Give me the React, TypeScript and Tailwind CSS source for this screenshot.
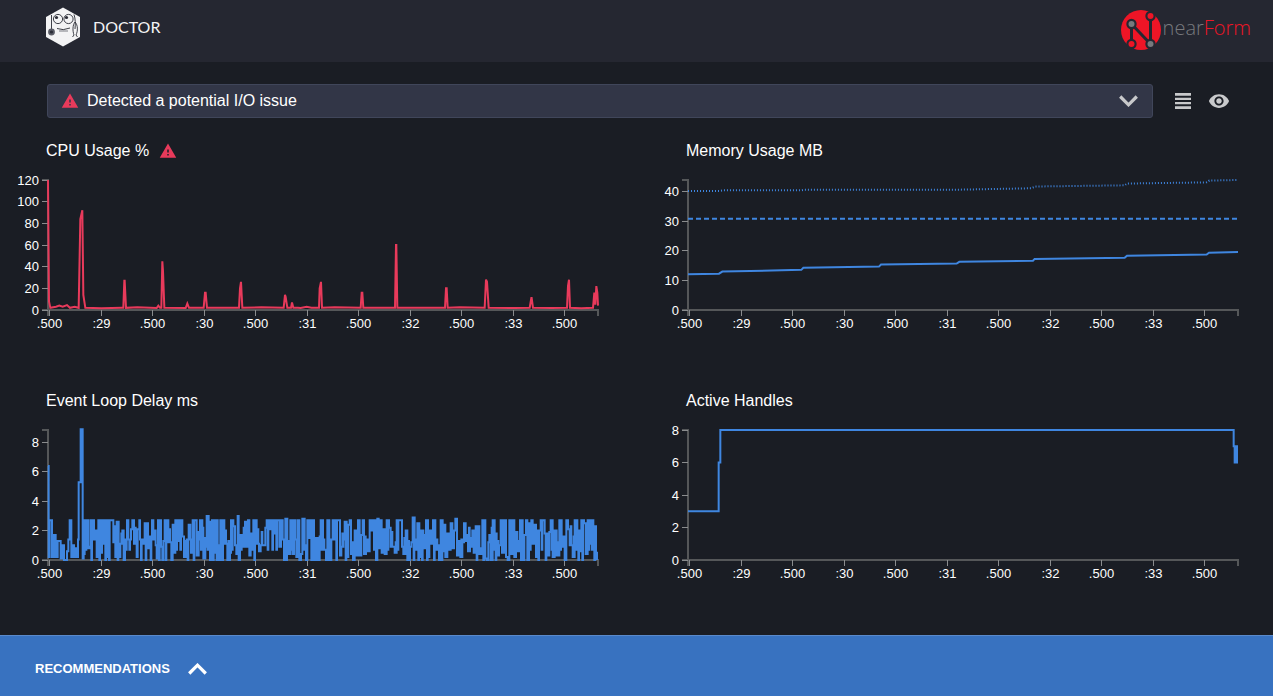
import React from 'react'
import { MdVisibility, MdWarning } from 'react-icons/md'

type Point = [number, number]
type Tick = { label: string; y: number }

/* Plot frame inside each 600 x 170 chart drawing */
const LEFT = 40
const RIGHT = 590
const TOP = 10
const BOTTOM = 140

const TIME_TICKS: [number, string][] = [
  [41.5, '.500'], [93.5, ':29'], [144.5, '.500'], [196.5, ':30'], [247.5, '.500'], [299.5, ':31'],
  [350.5, '.500'], [402.5, ':32'], [453.5, '.500'], [505.5, ':33'], [556.5, '.500'],
]

/* Samples: x in thirds of a unit from the left of the plot, y in percent */
const CPU: Point[] = [
  [0, 120], [3, 8], [7, 2], [24, 3], [34, 4], [44, 3], [57, 4.5], [66, 2], [80, 3], [92, 2], [97, 84], [103, 92], [106, 14],
  [112, 2], [160, 1.6], [222, 2], [226, 2], [229, 27], [230, 27], [234, 2], [268, 2.5], [326, 1.8], [331, 4], [336, 2], [340, 2],
  [343, 45], [345, 36], [349, 2], [413, 1.8], [418, 6], [423, 2], [467, 2], [471, 16], [473, 16], [477, 2], [573, 2],
  [576, 20], [579, 26], [583, 2], [640, 2.5], [707, 2], [711, 14], [713, 12], [718, 2], [729, 2], [732, 7], [736, 2],
  [750, 2], [758, 1.8], [776, 3], [790, 2], [813, 2], [815, 20], [819, 26], [822, 2], [860, 2.5], [938, 2], [941, 16],
  [943, 16], [946, 2], [1041, 2], [1044, 60], [1045, 60], [1048, 2], [1100, 2], [1191, 2], [1194, 20], [1196, 20], [1199, 2],
  [1235, 2.5], [1310, 2], [1314, 28], [1317, 26], [1322, 2], [1400, 1.8], [1445, 2], [1450, 11], [1451, 11],
  [1455, 2], [1510, 1.8], [1557, 2], [1560, 22], [1563, 28], [1566, 2], [1600, 1.6], [1635, 2], [1639, 16],
  [1642, 5], [1645, 22], [1648, 16], [1650, 4],
]

/* Samples: x in thirds of a unit from the left of the plot, y in tenths of a millisecond */
const DELAY: Point[] = [
  [0, 64], [2, 2], [5, 27], [12, 2], [17, 17], [23, 2], [29, 13], [38, 1], [43, 10], [48, 0], [57, 6], [61, 14], [65, 27],
  [70, 2], [75, 10], [78, 2], [82, 8], [86, 2], [90, 14], [92, 53], [98, 89], [104, 1], [107, 4], [110, 27], [120, 8],
  [124, 9], [127, 27], [138, 14], [143, 20], [146, 2], [151, 27], [158, 5], [162, 27], [166, 11], [169, 27], [176, 2],
  [180, 27], [196, 12], [199, 23], [202, 2], [206, 26], [212, 2], [217, 11], [223, 20], [227, 0], [231, 14], [237, 27],
  [241, 14], [249, 21], [253, 27], [258, 11], [266, 2], [269, 21], [274, 27], [276, 14], [286, 11], [290, 25], [300, 8],
  [305, 16], [312, 27], [316, 14], [319, 20], [323, 10], [326, 1], [330, 27], [339, 9], [343, 0], [346, 13], [350, 27],
  [361, 12], [370, 0], [374, 24], [377, 5], [382, 27], [390, 13], [394, 27], [403, 16], [408, 2], [416, 14], [422, 24],
  [427, 14], [429, 5], [434, 27], [446, 3], [452, 14], [456, 27], [463, 22], [466, 1], [472, 9], [476, 30], [482, 26],
  [486, 0], [492, 27], [498, 5], [503, 27], [509, 10], [513, 0], [517, 27], [520, 0], [525, 27], [529, 11], [538, 0],
  [546, 5], [549, 27], [556, 23], [561, 10], [565, 4], [569, 30], [572, 0], [576, 17], [584, 9], [591, 26], [596, 9],
  [600, 27], [604, 3], [608, 18], [616, 27], [626, 11], [633, 6], [638, 10], [652, 22], [656, 27], [666, 21], [670, 27],
  [678, 18], [682, 27], [694, 9], [699, 27], [704, 14], [708, 0], [712, 28], [718, 13], [723, 4], [727, 27], [734, 4],
  [738, 27], [742, 14], [745, 2], [749, 27], [754, 0], [759, 4], [763, 28], [770, 10], [774, 0], [778, 27], [783, 15],
  [787, 27], [798, 0], [804, 15], [810, 0], [815, 16], [818, 27], [825, 14], [829, 7], [834, 0], [838, 27], [844, 0],
  [850, 14], [854, 27], [858, 14], [862, 27], [876, 3], [880, 9], [886, 14], [890, 26], [896, 2], [901, 24], [905, 27],
  [909, 4], [915, 0], [920, 20], [925, 3], [930, 27], [935, 3], [940, 17], [944, 27], [948, 4], [954, 14], [960, 6],
  [965, 27], [970, 20], [975, 27], [984, 0], [988, 28], [992, 8], [996, 27], [1001, 5], [1006, 21], [1010, 4], [1016, 27],
  [1023, 22], [1028, 9], [1040, 5], [1046, 27], [1062, 9], [1066, 4], [1073, 20], [1078, 0], [1086, 9], [1090, 12],
  [1094, 29], [1100, 14], [1108, 25], [1114, 2], [1119, 20], [1126, 8], [1134, 27], [1140, 2], [1144, 20], [1149, 11],
  [1155, 27], [1162, 14], [1168, 10], [1173, 0], [1178, 27], [1184, 6], [1188, 24], [1192, 2], [1198, 18], [1203, 7],
  [1208, 25], [1213, 8], [1218, 20], [1222, 28], [1227, 3], [1232, 13], [1237, 2], [1243, 12], [1248, 25], [1253, 13],
  [1260, 6], [1266, 9], [1273, 20], [1277, 5], [1283, 23], [1289, 4], [1295, 8], [1299, 4], [1303, 27], [1312, 1],
  [1316, 0], [1321, 12], [1328, 0], [1334, 27], [1340, 18], [1346, 3], [1353, 10], [1358, 27], [1362, 5], [1368, 27],
  [1374, 2], [1379, 0], [1384, 27], [1388, 4], [1394, 27], [1399, 2], [1404, 19], [1408, 6], [1416, 27], [1424, 0],
  [1429, 17], [1434, 27], [1438, 0], [1443, 25], [1450, 27], [1454, 11], [1460, 24], [1464, 2], [1468, 20], [1478, 27],
  [1490, 18], [1500, 3], [1504, 19], [1508, 27], [1514, 2], [1520, 20], [1526, 3], [1534, 27], [1541, 9], [1546, 16],
  [1550, 0], [1555, 27], [1560, 21], [1565, 10], [1574, 2], [1580, 27], [1588, 20], [1594, 6], [1600, 27], [1608, 25],
  [1613, 4], [1619, 27], [1625, 11], [1629, 27], [1636, 23], [1644, 5], [1647, 0],
]

const HEAP_USED: Point[] = [
  [0, 12.1], [93, 12.3], [103, 13], [340, 13.6], [346, 14.3], [573, 14.7], [579, 15.4], [806, 15.7], [814, 16.3], [1035, 16.7],
  [1040, 17.3], [1310, 17.7], [1317, 18.4], [1556, 18.8], [1563, 19.4], [1650, 19.6],
]

const RSS: Point[] = [
  [0, 40.3], [95, 40.3], [105, 40.5], [340, 40.5], [350, 40.7], [800, 40.7], [1030, 41.2], [1042, 41.8], [1310, 42.2],
  [1317, 42.8], [1556, 43.2], [1564, 43.8], [1650, 44],
]

const px = (x: number) => (LEFT + x / 3).toFixed(2)
const py = (v: number, max: number) => (BOTTOM - (v / max) * (BOTTOM - TOP)).toFixed(2)

const line = (points: Point[], max: number) =>
  points.map(([x, v], i) => `${i ? 'L' : 'M'}${px(x)},${py(v, max)}`).join('')

const steps = (points: Point[], max: number) =>
  points.map(([x, v], i) => (i ? `H${px(x)}V${py(v, max)}` : `M${px(x)},${py(v, max)}`)).join('')

const fillGaps = (points: Point[]): Point[] =>
  points.flatMap(([x, v], i): Point[] => {
    const next = points[i + 1]
    if (!next || x < 110 || next[0] - x < 6) return [[x, v]]
    const swing = v > 13 ? (i * 7) % 14 : 12 + ((i * 5) % 12)
    return [[x, v], [x + 3, swing], [x + 5, v]]
  })

const ticks = (values: number[], max: number): Tick[] =>
  values.map((v) => ({ label: String(v), y: Math.floor(BOTTOM - (v / max) * (BOTTOM - TOP)) + 0.5 }))

type ChartProps = {
  title: string
  alert?: boolean
  yTicks: Tick[]
  children: React.ReactNode
}

function Chart({ title, alert, yTicks, children }: ChartProps) {
  return (
    <section className="h-[250px]">
      <h2 className="flex h-9 items-center gap-2.5 pb-0.5 pl-[38px] text-base text-white">
        {title}
        {alert && <MdWarning className="size-[18px] text-[#e83a5b]" aria-label="Issue detected" />}
      </h2>
      <svg viewBox="0 0 600 170" className="block w-full" role="img" aria-label={title}>
        <g fill="none" stroke="#555759" strokeWidth="2">
          <path d={`M34,${TOP}H${LEFT}V${BOTTOM}H34`} />
          <path d={`M${LEFT},146V${BOTTOM}H${RIGHT}V146`} />
        </g>
        <g stroke="#8a8c8e">
          {yTicks.map((t) => (
            <line key={t.label} x1="34" x2="40" y1={t.y} y2={t.y} />
          ))}
          {TIME_TICKS.map(([x]) => (
            <line key={x} x1={x} x2={x} y1="140" y2="146" />
          ))}
        </g>
        <g fill="#fff" fontSize="13">
          {yTicks.map((t) => (
            <text key={t.label} x="31" y={t.y + 4.5} textAnchor="end">
              {t.label}
            </text>
          ))}
          {TIME_TICKS.map(([x, label]) => (
            <text key={x} x={x} y="158" textAnchor="middle">
              {label}
            </text>
          ))}
        </g>
        <g fill="none" strokeWidth="2">
          {children}
        </g>
      </svg>
    </section>
  )
}

function DoctorLogo() {
  return (
    <svg viewBox="0 0 34 40" className="h-10 w-[34px]" aria-hidden="true">
      <path d="M17 0.5L34 10V30L17 39.500L0 30V10Z" fill="#f3f3f4" />
      <g fill="none" stroke="#2a2c36" strokeWidth="0.9">
        <circle cx="12" cy="12" r="4.600" />
        <circle cx="22.500" cy="12" r="4.600" />
        <path d="M5.500 8V23M28 7.500C29.500 12 29.500 17 29 22M11 21.500Q17 24 24 21" />
        <path d="M13 24H22" strokeWidth="0.6" />
        <path d="M29 15C26.500 18 26.500 24 28 28L26.500 30M29 15C32 18 32 24 30 28L31.500 30" />
      </g>
      <circle cx="10.500" cy="10.500" r="1.600" fill="#2a2c36" />
      <circle cx="20.500" cy="10.500" r="1.600" fill="#2a2c36" />
      <circle cx="5.500" cy="25" r="2.500" fill="#2a2c36" stroke="#5a5c66" strokeWidth="1.800" />
    </svg>
  )
}

function NearFormMark() {
  return (
    <svg viewBox="0 0 40 40" className="size-10" aria-hidden="true">
      <circle cx="20" cy="20" r="20" fill="#ee1526" />
      <path d="M10.500 14V34M10.500 14L29.500 34M29.500 6V34" fill="none" stroke="#252731" strokeWidth="3" />
      <g fill="#252731">
        <circle cx="10.500" cy="14" r="5.200" />
        <circle cx="29.500" cy="6" r="5.200" />
        <circle cx="10.500" cy="34" r="5.200" />
        <circle cx="29.500" cy="34" r="5.200" />
      </g>
      <g fill="#ee1526">
        <circle cx="29.500" cy="6" r="3" />
        <circle cx="10.500" cy="34" r="3" />
      </g>
      <g fill="#77797d">
        <circle cx="10.500" cy="14" r="3" />
        <circle cx="29.500" cy="34" r="3" />
      </g>
    </svg>
  )
}

function Chevron({ up = false }: { up?: boolean }) {
  return (
    <svg viewBox="0 0 19 12" className="h-3 w-[19px]" aria-hidden="true">
      <path d={up ? 'M1.200 10.500L9.500 2.200L17.800 10.500' : 'M1.200 1.500L9.500 9.800L17.800 1.500'} fill="none" stroke="currentColor" strokeWidth="3.200" />
    </svg>
  )
}

export default function App() {
  return (
    <div className="flex min-h-screen flex-col bg-[#1a1d24] font-['Liberation_Sans',Arial,sans-serif] text-white">
      <header className="flex h-[62px] items-center justify-between bg-[#252731] pr-[22px] pb-0.5 pl-[46px]">
        <div className="flex items-center gap-[13px] pb-1.5">
          <DoctorLogo />
          <h1 className="font-['Lato','Liberation_Sans',sans-serif] text-base text-[#f3f3f4]">DOCTOR</h1>
        </div>
        <a href="#nearform" className="flex items-center gap-0.5">
          <NearFormMark />
          <span className="pb-1 font-['Open_Sans','Noto_Sans',sans-serif] text-xl font-light text-[#77797d]">
            near<span className="text-[#ee1526]">Form</span>
          </span>
        </a>
      </header>

      <div className="flex items-center pt-[22px] pr-[43px] pl-[47px]">
        <button type="button" className="flex h-[34px] flex-1 items-center rounded-[3px] border border-[#40465a] bg-[#323647] pr-3.5 pl-[13px] text-left text-base">
          <MdWarning className="mr-2 size-[18px] text-[#e83a5b]" aria-hidden="true" />
          <span className="flex-1">Detected a potential I/O issue</span>
          <span className="text-[#c8c9cb]">
            <Chevron />
          </span>
        </button>
        <button type="button" aria-label="Grid layout" className="ml-[22px] text-[#c8c9cb]">
          <svg viewBox="0 0 16 16" className="size-4" fill="currentColor" aria-hidden="true">
            <path d="M0 0H16V2.800H0ZM0 4.800H16V7H0ZM0 9H16V11.200H0ZM0 13.200H16V16H0Z" />
          </svg>
        </button>
        <button type="button" aria-label="Toggle theme" className="ml-[17px] text-[#c8c9cb]">
          <MdVisibility className="size-[22px]" />
        </button>
      </div>

      <main className="grid grid-cols-2 gap-x-10 pt-4 pr-[25px] pl-2">
        <Chart title="CPU Usage %" alert yTicks={ticks([0, 20, 40, 60, 80, 100, 120], 120)}>
          <path d={line(CPU, 120)} stroke="#e83a5b" />
        </Chart>
        <Chart title="Memory Usage MB" yTicks={ticks([0, 10, 20, 30, 40], 44)}>
          <path d={line(RSS, 44)} stroke="#3f86e0" strokeDasharray="1 2" />
          <path d={line([[0, 30.9], [1650, 30.9]], 44)} stroke="#3f86e0" strokeDasharray="5 3" />
          <path d={line(HEAP_USED, 44)} stroke="#3f86e0" />
        </Chart>
        <Chart title="Event Loop Delay ms" yTicks={ticks([0, 2, 4, 6, 8], 8.85)}>
          <path d={steps(fillGaps(DELAY), 88.5)} stroke="#3f86e0" />
        </Chart>
        <Chart title="Active Handles" yTicks={ticks([0, 2, 4, 6, 8], 8)}>
          <path d={steps([[0, 3], [92, 6], [97, 8], [1637, 7], [1640, 6], [1643, 7], [1647, 6], [1650, 6]], 8)} stroke="#3f86e0" />
        </Chart>
      </main>

      <footer className="mt-auto border-t border-[#5a8acb] bg-[#3872c0]">
        <button type="button" className="flex h-[60px] w-full items-center gap-[18px] px-[35px] pt-1.5 text-[13px] font-bold">
          RECOMMENDATIONS
          <Chevron up />
        </button>
      </footer>
    </div>
  )
}
